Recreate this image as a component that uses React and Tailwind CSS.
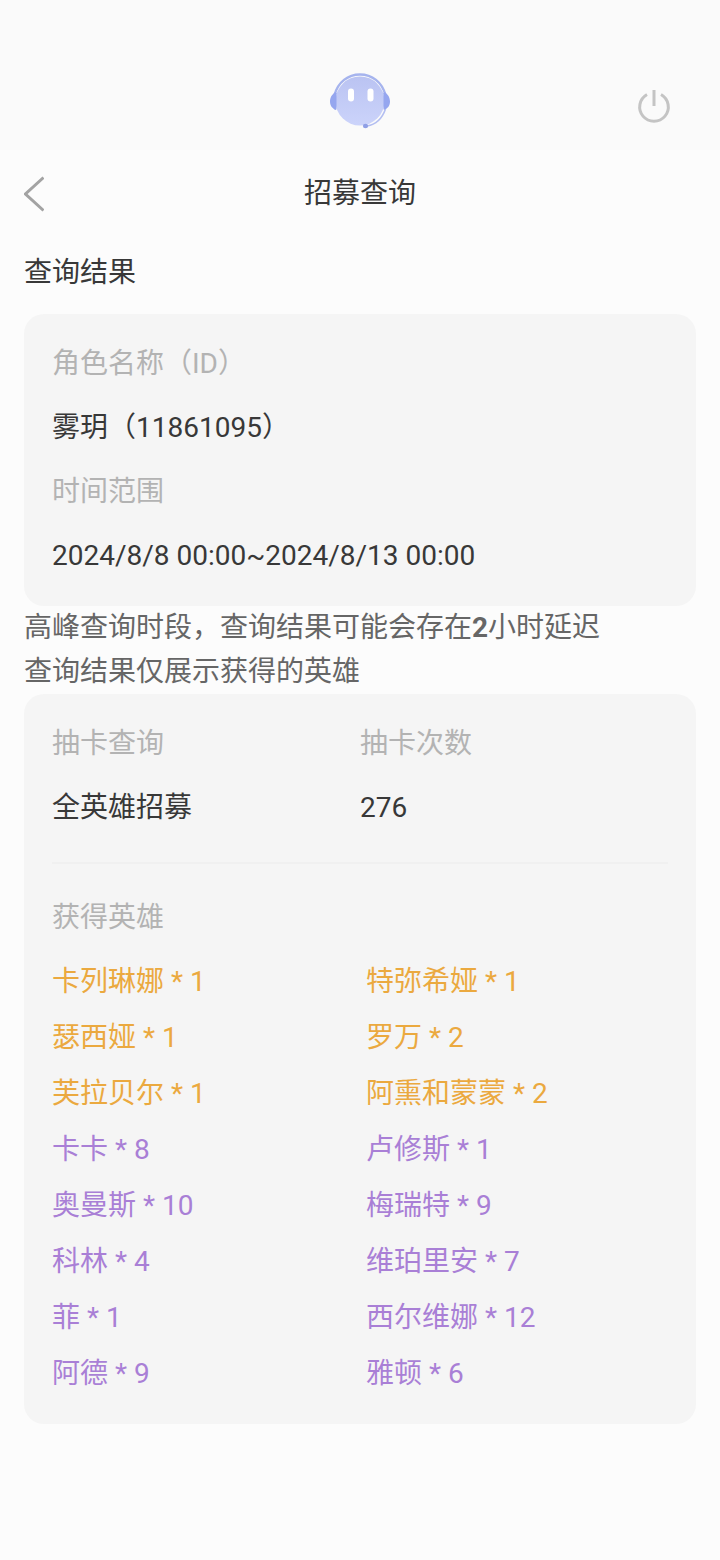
import React from "react";

const heroes = [
  { name: "卡列琳娜", count: 1, rarity: "gold" },
  { name: "特弥希娅", count: 1, rarity: "gold" },
  { name: "瑟西娅", count: 1, rarity: "gold" },
  { name: "罗万", count: 2, rarity: "gold" },
  { name: "芙拉贝尔", count: 1, rarity: "gold" },
  { name: "阿熏和蒙蒙", count: 2, rarity: "gold" },
  { name: "卡卡", count: 8, rarity: "purple" },
  { name: "卢修斯", count: 1, rarity: "purple" },
  { name: "奥曼斯", count: 10, rarity: "purple" },
  { name: "梅瑞特", count: 9, rarity: "purple" },
  { name: "科林", count: 4, rarity: "purple" },
  { name: "维珀里安", count: 7, rarity: "purple" },
  { name: "菲", count: 1, rarity: "purple" },
  { name: "西尔维娜", count: 12, rarity: "purple" },
  { name: "阿德", count: 9, rarity: "purple" },
  { name: "雅顿", count: 6, rarity: "purple" },
];

const BotAvatar = () => (
  <svg className="w-[60px] h-[56px]" viewBox="0 0 60 56" fill="none" aria-hidden="true">
    <defs>
      <linearGradient id="face" x1="30" y1="3" x2="30" y2="52" gradientUnits="userSpaceOnUse">
        <stop stopColor="#bac3f2" />
        <stop offset="1" stopColor="#cbd3fa" />
      </linearGradient>
    </defs>
    <circle cx="30" cy="28" r="24.5" fill="url(#face)" />
    <path d="M4.500 22C8 9 18 1.500 30 1.500S52 9 55.500 22" stroke="#a6b4ee" strokeWidth="2.400" />
    <path d="M5.500 19C2.500 21 0 24 0 28.500S2.500 35.500 6 37C4.800 31 4.800 25 6.500 20Z" fill="#95a6ef" />
    <path d="M54.500 19C57.500 21 60 24 60 28.500S57.500 35.500 54 37C55.200 31 55.200 25 53.500 20Z" fill="#95a6ef" />
    <path d="M4.500 20H6.500V36.500H4.500Z" fill="#95a6ef" />
    <path d="M53.500 20H55.500V36.500H53.500Z" fill="#95a6ef" />
    <path d="M55.500 36C52 46 46 51.500 37 53" stroke="#b3bef1" strokeWidth="1.600" />
    <ellipse cx="35.500" cy="53" rx="2.600" ry="2.200" fill="#8f9fe6" />
    <rect x="18" y="15.500" width="6" height="13" rx="3" fill="#fff" />
    <rect x="37.500" y="15.500" width="6" height="13" rx="3" fill="#fff" />
  </svg>
);

const Field = ({ label, value }) => (
  <div className="flex flex-col gap-5">
    <dt className="text-[#b3b3b3]">{label}</dt>
    <dd>{value}</dd>
  </div>
);

const App = () => {
  return (
    <div
      lang="zh-CN"
      className="min-h-screen bg-[#fcfcfc] text-[28px] leading-[44px] text-[#383838] font-['Roboto','Noto_Sans_CJK_SC',sans-serif]"
    >
      <header className="grid grid-cols-3 items-end bg-[#fafafa] h-[150px] px-12 pb-[21px]">
        <div className="col-start-2 justify-self-center">
          <BotAvatar />
        </div>
        <button type="button" aria-label="退出" className="justify-self-end pb-1">
          <svg className="w-9 h-9" viewBox="0 0 36 36" fill="none" stroke="#c4c4c4" strokeWidth="3">
            <path d="M11 5.500A14.300 14.300 0 1 0 25 5.500" />
            <path d="M18 1V17" />
          </svg>
        </button>
      </header>

      <nav className="grid grid-cols-3 items-center px-6 h-[87px]">
        <button type="button" aria-label="返回">
          <svg className="w-5 h-9" viewBox="0 0 20 36" fill="none" stroke="#a3a3a3" strokeWidth="3">
            <path d="M19.500 1.500L1.500 18L19.500 34.500" />
          </svg>
        </button>
        <h1 className="text-center">招募查询</h1>
      </nav>

      <main className="px-6 pt-3.5">
        <h2>查询结果</h2>

        <dl className="mt-[19px] flex flex-col gap-5 rounded-[20px] bg-[#f5f5f5] p-7">
          <Field label="角色名称（ID）" value="雾玥（11861095）" />
          <Field label="时间范围" value="2024/8/8 00:00~2024/8/13 00:00" />
        </dl>

        <p className="text-[#666666]">
          高峰查询时段，查询结果可能会存在<b>2</b>小时延迟
          <br />
          查询结果仅展示获得的英雄
        </p>

        <section className="rounded-[20px] bg-[#f5f5f5] p-7">
          <dl className="grid grid-cols-2 border-b-2 border-[#f0f0f0] pb-8">
            <Field label="抽卡查询" value="全英雄招募" />
            <Field label="抽卡次数" value="276" />
          </dl>

          <h3 className="mt-8 text-[#b3b3b3]">获得英雄</h3>
          <ul className="mt-5 grid grid-cols-2 gap-3">
            {heroes.map((hero) => (
              <li
                key={hero.name}
                className={hero.rarity === "gold" ? "text-[#eba93f]" : "text-[#a97fd6]"}
              >
                {hero.name} * {hero.count}
              </li>
            ))}
          </ul>
        </section>
      </main>
    </div>
  );
};

export default App;
